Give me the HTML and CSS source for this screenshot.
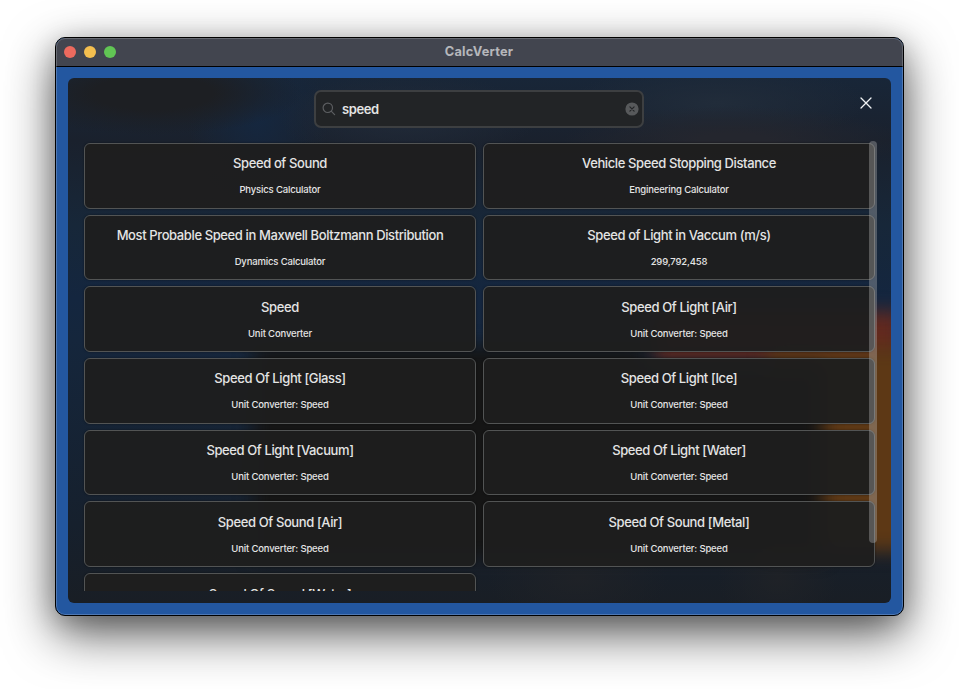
FILE: index.html
```html
<!DOCTYPE html>
<html lang="en">
<head>
<meta charset="utf-8">
<title>CalcVerter</title>
<link rel="stylesheet" href="styles.css">
</head>
<body>
<main class="window">
  <header class="titlebar">
    <div class="lights"><i class="light red"></i><i class="light yellow"></i><i class="light green"></i></div>
    <h1>CalcVerter</h1>
  </header>
  <section class="panel">
    <div class="glow glow-red"></div>
    <div class="glow glow-orange"></div>
    <div class="glow glow-dark"></div>
    <div class="toolbar">
      <div class="search">
        <svg class="lens" viewBox="0 0 14 14" width="14" height="14"><circle cx="5.8" cy="5.8" r="4.7"/><path d="M9.2 9.2 12.6 12.6"/></svg>
        <span class="query">speed</span>
        <svg class="clear" viewBox="0 0 14 14" width="14" height="14"><circle cx="7" cy="7" r="6.6"/><path d="M4.9 4.9 9.1 9.1M9.1 4.9 4.9 9.1"/></svg>
      </div>
      <svg class="close" viewBox="0 0 12 12" width="12" height="12"><path d="M1 1 11 11M11 1 1 11"/></svg>
    </div>
    <div class="results">
      <div class="grid">
        <article class="card"><h2>Speed of Sound</h2><p>Physics Calculator</p></article>
        <article class="card"><h2>Vehicle Speed Stopping Distance</h2><p>Engineering Calculator</p></article>
        <article class="card"><h2>Most Probable Speed in Maxwell Boltzmann Distribution</h2><p>Dynamics Calculator</p></article>
        <article class="card"><h2>Speed of Light in Vaccum (m/s)</h2><p>299,792,458</p></article>
        <article class="card"><h2>Speed</h2><p>Unit Converter</p></article>
        <article class="card"><h2>Speed Of Light [Air]</h2><p>Unit Converter: Speed</p></article>
        <article class="card"><h2>Speed Of Light [Glass]</h2><p>Unit Converter: Speed</p></article>
        <article class="card"><h2>Speed Of Light [Ice]</h2><p>Unit Converter: Speed</p></article>
        <article class="card"><h2>Speed Of Light [Vacuum]</h2><p>Unit Converter: Speed</p></article>
        <article class="card"><h2>Speed Of Light [Water]</h2><p>Unit Converter: Speed</p></article>
        <article class="card"><h2>Speed Of Sound [Air]</h2><p>Unit Converter: Speed</p></article>
        <article class="card"><h2>Speed Of Sound [Metal]</h2><p>Unit Converter: Speed</p></article>
        <article class="card"><h2>Speed Of Sound [Water]</h2></article>
      </div>
      <div class="scrollbar"></div>
    </div>
  </section>
</main>
</body>
</html>
```
FILE: styles.css
```css
* { box-sizing: border-box; }
body {
  margin: 0;
  height: 689px;
  padding: 37px 55px 0;
  overflow: hidden;
  background: #fff;
  font-family: Inter, "Liberation Sans", sans-serif;
  color: #e4e4e4;
}
.window {
  width: 849px;
  height: 579px;
  border: 1px solid #000;
  border-radius: 10px;
  overflow: hidden;
  background: #2357a0;
  box-shadow: 0 18px 50px rgba(0, 0, 0, .64), 0 6px 26px rgba(0, 0, 0, .2);
  position: relative;
}
.window::after {
  content: "";
  position: absolute;
  inset: 0;
  border: 1px solid rgba(255, 255, 255, .2);
  border-radius: 9px;
}
.titlebar {
  height: 29px;
  display: grid;
  grid-template-columns: 100px 1fr 101px;
  align-items: center;
  background: #42454f;
  border-bottom: 1px solid #000;
}
.titlebar h1 {
  margin: 0;
  text-align: center;
  font-size: 12.8px;
  letter-spacing: .2px;
  font-weight: 700;
  line-height: 16px;
  color: #b6b7bb;
}
.lights { display: flex; gap: 8px; padding-left: 8px; }
.light { width: 12px; height: 12px; border-radius: 50%; }
.red { background: #ec6a5e; }
.yellow { background: #f4bf4f; }
.green { background: #61c554; }
.panel {
  position: relative;
  width: 823px;
  height: 525px;
  margin: 11px 0 0 12px;
  border-radius: 6px;
  overflow: hidden;
  background:
    radial-gradient(ellipse 150px 42px at 85px 15px, #1d1f23 40%, transparent),
    radial-gradient(ellipse 170px 34px at 665px 62px, #24262e 20%, transparent),
    radial-gradient(ellipse 130px 45px at 340px 40px, #212a38, transparent),
    radial-gradient(ellipse 150px 40px at 650px 25px, #212c3a, transparent),
    radial-gradient(ellipse 70px 90px at 190px 40px, #15273f, transparent),
    radial-gradient(ellipse 90px 50px at 510px 500px, #1f2227, transparent),
    radial-gradient(ellipse 60px 50px at 710px 500px, #1f2227, transparent),
    linear-gradient(#182638, #1a212d 12%, #172739 28%, #14263f 42%, #15263c 50%, #16202d 85%, #191e25);
}
.glow { position: absolute; filter: blur(9px); }
.glow-red { left: 585px; top: 234px; width: 250px; height: 50px; background: #63291f; }
.glow-orange {
  left: 700px;
  top: 268px;
  width: 150px;
  height: 205px;
  background: #5d3815;
}
.glow-dark {
  left: 185px;
  top: 268px;
  width: 570px;
  height: 212px;
  background: linear-gradient(90deg, #151515 390px, transparent 400px) 0 0 / 100% 20px no-repeat, linear-gradient(#151515, #151515) 0 20px no-repeat;
}
.toolbar {
  position: relative;
  height: 63px;
  display: grid;
  grid-template-columns: 246px 330px 1fr;
  align-items: start;
  padding: 12px 19px 0 0;
}
.search {
  grid-column: 2;
  height: 38px;
  display: flex;
  align-items: center;
  padding: 0 4px 1px 6px;
  border: 2px solid #3d3f41;
  border-radius: 7px;
  background: #222426;
}
.query {
  flex: 1;
  margin-left: 6px;
  font-size: 13px;
  font-weight: 600;
  letter-spacing: -.4px;
  line-height: 18px;
}
svg { fill: none; stroke-linecap: round; }
.lens { stroke: #5c5e61; stroke-width: 1.2; }
.clear { margin-right: -1px; }
.clear circle { fill: #57595b; }
.clear path { stroke: #242628; stroke-width: 1.2; }
.close { justify-self: end; margin-top: 7px; stroke: #f0f2f4; stroke-width: 1.3; }
.results {
  position: relative;
  height: 450px;
  padding: 2px 0 0 16px;
  overflow: hidden;
}
.grid {
  display: grid;
  grid-template-columns: 392px 392px;
  grid-auto-rows: 65.7px;
  gap: 6px 7px;
}
.card {
  border: 1px solid #525454;
  border-radius: 6px;
  background: rgba(30, 30, 30, .96);
  box-shadow: 0 0 2px rgba(0, 0, 0, .5);
  text-align: center;
  white-space: nowrap;
}
.card h2 {
  margin: 10.4px 0 0;
  font-size: 13px;
  font-weight: 500;
  letter-spacing: -.39px;
  line-height: 18px;
}
.card p {
  margin: 11px 0 0;
  font-size: 9.5px;
  font-weight: 500;
  letter-spacing: -.16px;
  line-height: 14px;
}
.scrollbar {
  position: absolute;
  left: 801px;
  top: 0;
  width: 8px;
  height: 402px;
  border-radius: 4px;
  background: rgba(200, 200, 200, .33);
}
```
